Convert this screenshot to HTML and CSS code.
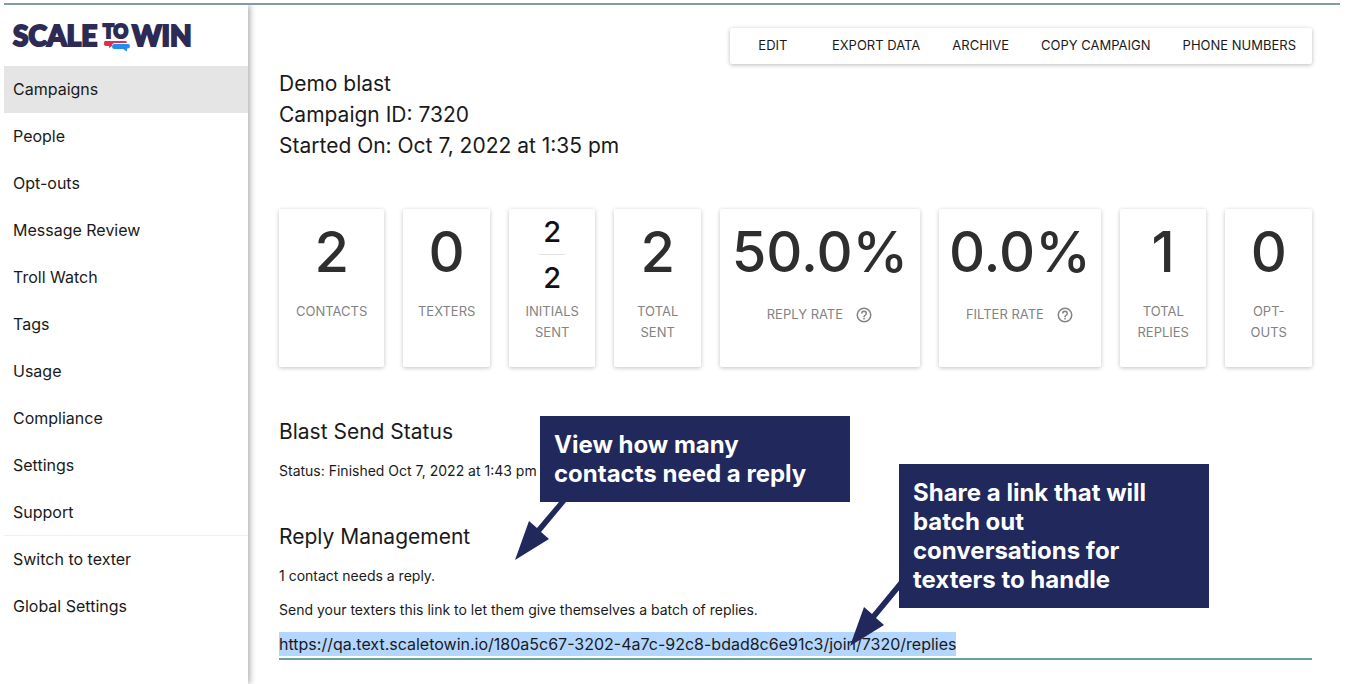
FILE: index.html
```html
<!DOCTYPE html>
<html lang="en">
<head>
<meta charset="utf-8">
<meta name="viewport" content="width=device-width, initial-scale=1">
<title>Demo blast – Scale to Win</title>
<link rel="stylesheet" href="styles.css">
</head>
<body>
<div class="app">
  <aside class="sidebar">
    <a class="logo" href="#" aria-label="Scale to Win">
      <svg width="178" height="31" viewBox="0 0 178 31" aria-hidden="true">
        <g class="logo-text">
          <text x="0" y="23" font-size="28">SCALE</text>
          <text x="90" y="15" font-size="18">TO</text>
          <text x="119" y="23" font-size="28">WIN</text>
        </g>
        <path fill="#dc354a" d="M92 18h20q2 0 2 2v0h-12q-3 0-3 3l-3 2v-2h-2q-3 0-3-2v-1q0-2 1-2z"/>
        <path fill="#1f8ff0" d="M101 21h14q2 0 2 2t-2 2.500h-1v3l-4-2.500h-9q-2-.500-2-2.500t2-2.500z"/>
      </svg>
    </a>
    <nav class="nav">
      <a class="active" href="#">Campaigns</a>
      <a href="#">People</a>
      <a href="#">Opt-outs</a>
      <a href="#">Message Review</a>
      <a href="#">Troll Watch</a>
      <a href="#">Tags</a>
      <a href="#">Usage</a>
      <a href="#">Compliance</a>
      <a href="#">Settings</a>
      <a href="#">Support</a>
      <a class="divided" href="#">Switch to texter</a>
      <a href="#">Global Settings</a>
    </nav>
  </aside>
  <main class="main">
    <div class="actions">
      <button type="button">Edit</button>
      <button type="button">Export Data</button>
      <button type="button">Archive</button>
      <button type="button">Copy Campaign</button>
      <button type="button">Phone Numbers</button>
    </div>
    <header class="title">
      <h1>Demo blast</h1>
      <p>Campaign ID: 7320</p>
      <p>Started On: Oct 7, 2022 at 1:35 pm</p>
    </header>
    <section class="stats" aria-label="Statistics">
      <div class="card"><div class="num">2</div><div class="label">Contacts</div></div>
      <div class="card"><div class="num">0</div><div class="label">Texters</div></div>
      <div class="card"><div class="num fraction"><span>2</span><span>2</span></div><div class="label">Initials Sent</div></div>
      <div class="card"><div class="num">2</div><div class="label">Total Sent</div></div>
      <div class="card"><div class="num">50.0%</div><div class="label with-help">Reply Rate
        <button class="help" type="button" aria-label="About reply rate"><svg width="18" height="18" viewBox="0 0 24 24"><path d="M11 18h2v-2h-2v2zm1-16a10 10 0 1 0 0 20 10 10 0 0 0 0-20zm0 18a8 8 0 1 1 0-16 8 8 0 0 1 0 16zm0-14a4 4 0 0 0-4 4h2a2 2 0 1 1 4 0c0 2-3 1.750-3 5h2c0-2.250 3-2.500 3-5a4 4 0 0 0-4-4z"/></svg></button></div></div>
      <div class="card"><div class="num">0.0%</div><div class="label with-help">Filter Rate
        <button class="help" type="button" aria-label="About filter rate"><svg width="18" height="18" viewBox="0 0 24 24"><path d="M11 18h2v-2h-2v2zm1-16a10 10 0 1 0 0 20 10 10 0 0 0 0-20zm0 18a8 8 0 1 1 0-16 8 8 0 0 1 0 16zm0-14a4 4 0 0 0-4 4h2a2 2 0 1 1 4 0c0 2-3 1.750-3 5h2c0-2.250 3-2.500 3-5a4 4 0 0 0-4-4z"/></svg></button></div></div>
      <div class="card"><div class="num">1</div><div class="label">Total Replies</div></div>
      <div class="card"><div class="num">0</div><div class="label">Opt-outs</div></div>
    </section>
    <section class="block">
      <h2>Blast Send Status</h2>
      <p>Status: Finished Oct 7, 2022 at 1:43 pm</p>
    </section>
    <section class="block">
      <h2>Reply Management</h2>
      <p>1 contact needs a reply.</p>
      <p><label for="reply-link">Send your texters this link to let them give themselves a batch of replies.</label></p>
      <div class="field"><input id="reply-link" type="text" readonly value="https://qa.text.scaletowin.io/180a5c67-3202-4a7c-92c8-bdad8c6e91c3/join/7320/replies"></div>
    </section>

    <div class="callout callout-contacts">View how many contacts need a reply
      <svg class="arrow arrow-contacts" width="51" height="58" viewBox="0 0 51 58" aria-hidden="true"><path d="M0 58 14 19 22 26 44 0H51L26 30 34 37z"/></svg>
    </div>
    <div class="callout callout-share">Share a link that will batch out conversations for texters to handle
      <svg class="arrow arrow-share" width="50" height="66" viewBox="0 0 50 66" aria-hidden="true"><path d="M0 66 14 27 22 34 50 0V9L26 38 34 45z"/></svg>
    </div>
  </main>
</div>
</body>
</html>
```
FILE: styles.css
```css
* { box-sizing: border-box; }
body {
  margin: 0;
  padding: 3px 6px 0 4px;
  background: #fff;
  color: #1a1a1a;
  font-family: Inter, "Noto Sans", sans-serif;
  font-size: 16px;
}
h1, h2, p { margin: 0; font-weight: 400; }
button, input { font: inherit; color: inherit; border: 0; padding: 0; background: none; }

.app {
  display: flex;
  min-height: calc(100vh - 3px);
  border-top: 2px solid #829ba6;
}

.sidebar {
  flex: 0 0 244px;
  box-shadow: 2px 0 6px rgba(0, 0, 0, .32);
  clip-path: inset(0 -12px 0 0);
}
.logo { display: block; height: 61px; padding: 18px 9px 0; }
.logo svg { display: block; overflow: visible; }
.logo-text {
  font-family: Lato, sans-serif;
  font-weight: 900;
  fill: #2d2b55;
  stroke: #2d2b55;
  stroke-width: 2;
}

.nav { display: flex; flex-direction: column; }
.nav a {
  height: 47px;
  padding-left: 9px;
  line-height: 47px;
  color: inherit;
  text-decoration: none;
}
.nav .active { background: #e5e5e5; }
.nav .divided { box-shadow: 0 -1px #f0f0f0; }

.main {
  position: relative;
  flex: 1;
  min-width: 0;
  padding: 23px 28px 24px 31px;
}

.actions {
  display: flex;
  width: fit-content;
  margin-left: auto;
  border-radius: 2px;
  box-shadow: 0 1px 4px rgba(0, 0, 0, .28);
}
.actions button {
  min-width: 86px;
  height: 36px;
  padding: 0 16px 2px;
  font-size: 13px;
  text-transform: uppercase;
}

.title { margin-top: 4px; }
.title h1, .title p { font-size: 21px; line-height: 31px; }

.stats {
  display: grid;
  grid-template-columns:
    minmax(0, 106fr) repeat(3, minmax(0, 87fr)) minmax(0, 201fr)
    minmax(0, 163fr) repeat(2, minmax(0, 87fr));
  gap: 19px;
  margin-top: 48px;
  margin-bottom: 49px;
}
.card {
  min-height: 158px;
  padding: 8px 12px;
  border-radius: 2px;
  box-shadow: 0 1px 4px rgba(0, 0, 0, .24);
  text-align: center;
}
.num {
  display: flex;
  justify-content: center;
  height: 72px;
  margin-bottom: 12px;
  color: #2e2e2e;
  font-size: 56px;
  font-weight: 500;
  line-height: 70px;
}
.fraction {
  flex-direction: column;
  align-items: center;
  padding-top: 4px;
  color: #111;
  font-size: 29px;
  line-height: 32px;
}
.fraction span + span {
  margin-top: 6px;
  padding: 7px 4px 0;
  border-top: 1px solid #e2e2e2;
}
.label {
  color: #838383;
  font-size: 13px;
  line-height: 21px;
  text-transform: uppercase;
}
.with-help {
  display: flex;
  align-items: center;
  justify-content: center;
  gap: 12px;
  padding-top: 3px;
}
.help { display: flex; }
.help svg { fill: currentColor; }

.block + .block { margin-top: 40px; }
.block h2 { font-size: 21px; line-height: 31px; }
.block p { margin-top: 13px; font-size: 14px; line-height: 21px; }

.field {
  display: flex;
  margin-top: 12px;
  padding-bottom: 2px;
  border-bottom: 2px solid #68a0a4;
}
.field input {
  field-sizing: content;
  max-width: 100%;
  height: 24px;
  background: #b3d6ff;
}

.callout {
  position: absolute;
  width: 310px;
  padding: 14px 30px 14px 14px;
  background: #21285b;
  color: #fff;
  font-size: 24px;
  font-weight: 700;
  line-height: 29px;
}
.callout-contacts { left: 292px; top: 411px; }
.callout-share { left: 651px; top: 459px; }
.arrow { position: absolute; fill: #21285b; }
.arrow-contacts { left: -25px; top: 100%; }
.arrow-share { left: -49px; top: 116px; }
```
